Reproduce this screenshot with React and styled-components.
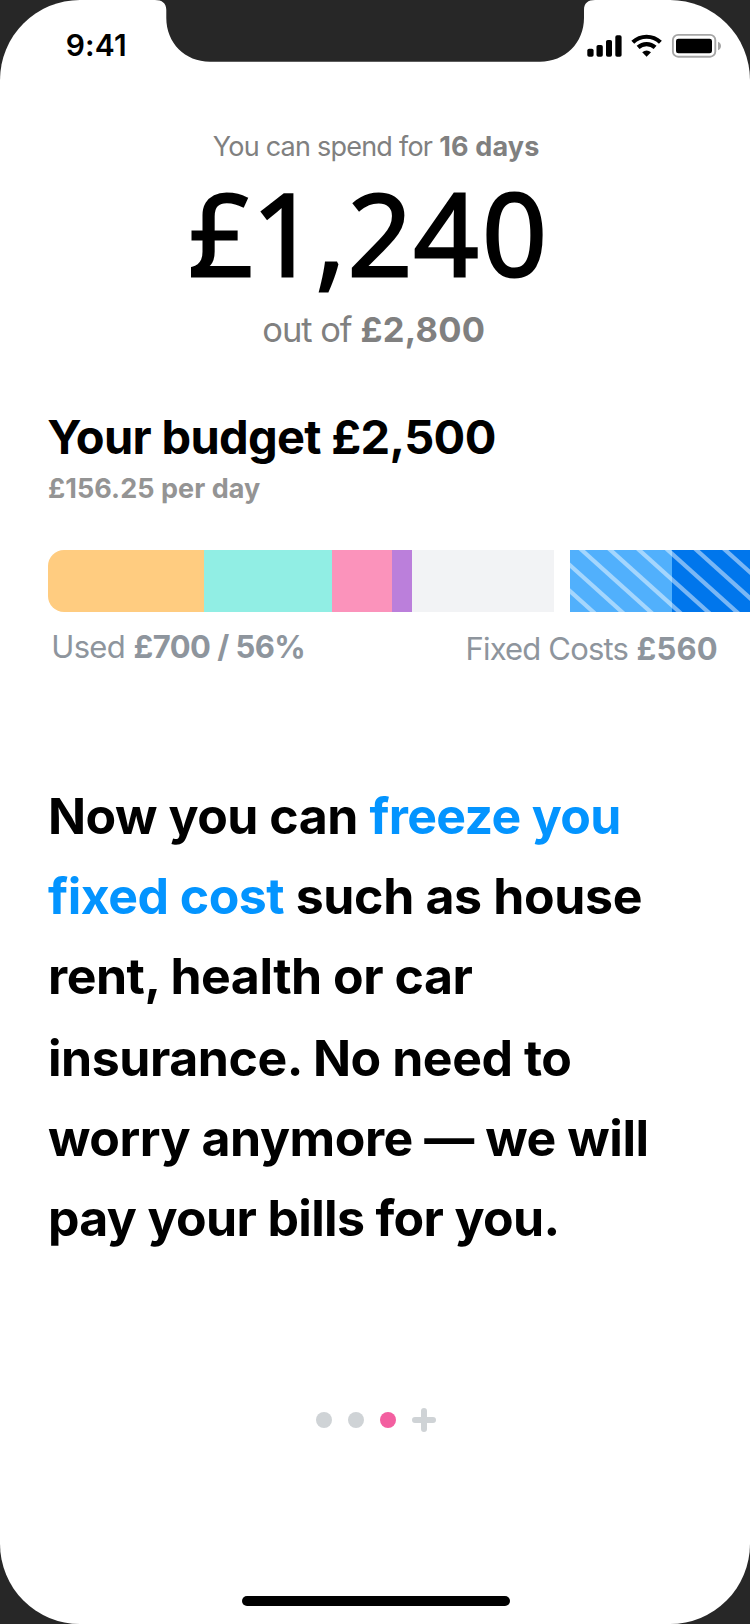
import React from "react";
import styled, { createGlobalStyle } from "styled-components";

const GlobalStyle = createGlobalStyle`
  * { box-sizing: border-box; }
  body { margin: 0; background: #272727; font-family: Inter, "Liberation Sans", sans-serif; }
`;

const Screen = styled.main`
  position: relative;
  display: flex;
  flex-direction: column;
  width: 750px;
  height: 1624px;
  overflow: hidden;
  background: #fff;
  border-radius: 80px;
`;

const Notch = styled.svg`
  position: absolute;
  top: 0;
  left: 155px;
`;

const StatusBar = styled.header`
  display: flex;
  justify-content: space-between;
  height: 131px;
  padding: 27px 29px 0 65.7px;
`;

const Clock = styled.time`
  font-size: 30px;
  font-weight: 600;
  line-height: 36px;
  letter-spacing: 0.172px;
`;

const StatusIcons = styled.svg`
  display: block;
  margin-top: 5px;
`;

const Run = styled.span`
  font-weight: ${(p) => p.$weight || 700};
  letter-spacing: ${(p) => p.$track || 0}px;
  color: ${(p) => p.$color || "inherit"};
`;

const TextRow = styled.div`
  display: flex;
  white-space: nowrap;
`;

const Caption = styled(TextRow)`
  gap: 7px;
  padding-left: 212.8px;
  font-size: 27px;
  line-height: 32px;
  color: #808080;
`;

const Amount = styled.div`
  display: flex;
  height: 110px;
  margin-top: 14px;
  padding-left: 187px;
  font: 400 113px/110px "Open Sans", sans-serif;
  -webkit-text-stroke: 3px #000;
`;

const Digit = styled.span`
  display: flex;
  justify-content: center;
  width: ${(p) => p.$width}px;
`;

const Total = styled(TextRow)`
  gap: 9px;
  margin-top: 22px;
  padding-left: 262.3px;
  font-size: 34.5px;
  line-height: 42px;
  color: #808080;
`;

const Budget = styled.section`
  margin-top: 58px;
  padding-left: 48px;
`;

const Title = styled.h1`
  margin: 0 0 0 -0.7px;
  font-size: 47px;
  font-weight: 700;
  line-height: 56px;
  letter-spacing: -0.68px;
`;

const PerDay = styled.p`
  margin: 8px 0 0;
  font-size: 27px;
  font-weight: 700;
  line-height: 32px;
  letter-spacing: 0.06px;
  color: #949494;
`;

const Bars = styled.div`
  display: flex;
  gap: 16px;
  height: 62px;
  margin-top: 45px;
`;

const Bar = styled.div`
  position: relative;
  display: flex;
  overflow: hidden;
  border-radius: ${(p) => (p.$rounded ? "16px 0 0 16px" : "0")};
`;

const Segment = styled.div`
  width: ${(p) => p.$width}px;
  background: ${(p) => p.$color};
`;

const Stripes = styled.svg`
  position: absolute;
  inset: 0;
`;

const Legend = styled.div`
  display: flex;
  height: 54px;
  margin-top: 16px;
  padding: 0 32px 0 3.3px;
  justify-content: space-between;
  font-size: 31px;
  line-height: 38px;
  color: #8e959d;
`;

const LegendItem = styled(TextRow)`
  gap: 8.5px;
  padding-top: ${(p) => p.$drop || 0}px;
`;

const Message = styled.section`
  margin-top: 94px;
  padding-left: 48px;
  font-size: 50px;
  line-height: 80px;
`;

const Paragraph = styled.div`
  margin-bottom: 2px;
`;

const Line = styled(TextRow)`
  gap: 11.6px;
`;

const Pager = styled.nav`
  display: flex;
  align-items: center;
  gap: 16px;
  height: 24px;
  margin-top: 150px;
  padding-left: 316px;
`;

const Dot = styled.i`
  width: 16px;
  height: 16px;
  border-radius: 50%;
  background: ${(p) => (p.$active ? "#f35fa0" : "#cfd3d6")};
`;

const HomeIndicator = styled.div`
  width: 268px;
  height: 10px;
  margin: auto 0 18px 242px;
  border-radius: 5px;
  background: #000;
`;

const digits = [["£", 68], ["1", 59], [",", 33], ["2", 66], ["4", 66], ["0", 71]];
const spending = [[156, "#ffcc80"], [128, "#91eee4"], [60, "#fb93bb"], [20, "#bb7fdb"], [142, "#f2f3f5"]];
const fixed = [[102, "#51b0fc"], [78, "#0076ec"]];
const stripeStarts = [-45.7, -17, 11.7, 40.4, 69.1, 97.8, 126.5, 155.2];
const BLUE = "#0394ff";

export default function App() {
  return (
    <>
      <GlobalStyle />
      <Screen>
        <Notch width="440" height="62" viewBox="0 0 440 62">
          <path
            d="M0 0C7 0 11.3 3 11.3 10V18C11.3 43 30 61.7 55 61.7H385C410 61.7 429 43 429 18V10C429 3 433 0 440 0Z"
            fill="#272727"
          />
        </Notch>
        <StatusBar>
          <Clock>9:41</Clock>
          <StatusIcons width="134" height="28" viewBox="587 32 134 28">
            <rect x="587.3" y="48.7" width="6.3" height="8" rx="1.8" />
            <rect x="596.5" y="45" width="6.3" height="11.7" rx="1.8" />
            <rect x="606" y="40" width="6" height="16.7" rx="1.8" />
            <rect x="615.3" y="35.3" width="6.3" height="21.4" rx="1.8" />
            <g fill="none" stroke="#000" strokeWidth="4.2">
              <path d="M632.8 42.2A20.2 20.2 0 0 1 660.4 42.2" />
              <path d="M638.1 47.4A12.6 12.6 0 0 1 655.1 47.4" />
            </g>
            <path d="M642.2 52.2A7 7 0 0 1 651 52.2L646.6 56.8Z" />
            <rect x="672.9" y="34.9" width="42.4" height="21.8" rx="5.2" fill="none" stroke="#a6a6a6" strokeWidth="1.9" />
            <rect x="676" y="38.7" width="36" height="14.6" rx="2.4" />
            <path d="M718 41.8C722 43.4 722 48.6 718 50.2Z" fill="#a6a6a6" />
          </StatusIcons>
        </StatusBar>

        <Caption>
          <Run $weight={400} $track={-0.775}>You can spend for</Run>
          <Run $weight={700} $track={0.157}>16 days</Run>
        </Caption>
        <Amount>
          {digits.map(([char, width], i) => (
            <Digit key={i} $width={width}>{char}</Digit>
          ))}
        </Amount>
        <Total>
          <Run $weight={400} $track={-1.06}>out of</Run>
          <Run $weight={700} $track={0.24}>£2,800</Run>
        </Total>

        <Budget>
          <Title>Your budget £2,500</Title>
          <PerDay>£156.25 per day</PerDay>
          <Bars>
            <Bar $rounded>
              {spending.map(([width, color]) => (
                <Segment key={color} $width={width} $color={color} />
              ))}
            </Bar>
            <Bar>
              {fixed.map(([width, color]) => (
                <Segment key={color} $width={width} $color={color} />
              ))}
              <Stripes width="180" height="62" viewBox="0 0 180 62">
                {stripeStarts.map((x) => (
                  <path key={x} d={`M${x - 11.1} -10L${x + 80.1} 72`} stroke="#fff" strokeOpacity="0.48" strokeWidth="4.2" />
                ))}
              </Stripes>
            </Bar>
          </Bars>
          <Legend>
            <LegendItem>
              <Run $weight={400} $track={-0.7}>Used</Run>
              <Run $weight={700} $track={-0.56}>£700 / 56%</Run>
            </LegendItem>
            <LegendItem $drop={2}>
              <Run $weight={400} $track={-0.83}>Fixed Costs</Run>
              <Run $weight={700} $track={0.218}>£560</Run>
            </LegendItem>
          </Legend>
        </Budget>

        <Message>
          <Paragraph>
            <Line>
              <Run $track={-0.5}>Now you can</Run>
              <Run $track={-0.66} $color={BLUE}>freeze you</Run>
            </Line>
            <Line>
              <Run $track={-0.53} $color={BLUE}>fixed cost</Run>
              <Run $track={-0.36}>such as house</Run>
            </Line>
            <Line><Run $track={-0.49}>rent, health or car</Run></Line>
          </Paragraph>
          <Line><Run $track={-0.45}>insurance. No need to</Run></Line>
          <Line><Run $track={-0.46}>worry anymore — we will</Run></Line>
          <Line><Run $track={-0.66}>pay your bills for you.</Run></Line>
        </Message>

        <Pager>
          <Dot />
          <Dot />
          <Dot $active />
          <svg width="24" height="24" viewBox="0 0 24 24">
            <path d="M12 3V21M3 12H21" stroke="#cfd3d6" strokeWidth="6" strokeLinecap="round" />
          </svg>
        </Pager>
        <HomeIndicator />
      </Screen>
    </>
  );
}
